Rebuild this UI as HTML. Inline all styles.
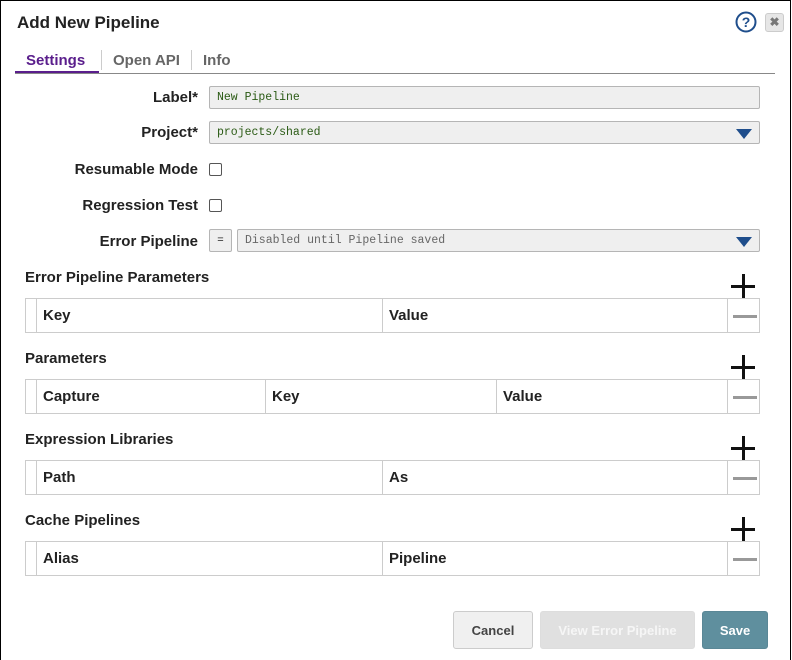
<!DOCTYPE html>
<html><head><style>
*{box-sizing:border-box;margin:0;padding:0}
body{width:792px;height:660px;background:#fff;font-family:"Liberation Sans",sans-serif;position:relative;overflow:hidden;color:#222}
.frame{position:absolute;left:0;top:0;width:791px;height:660px;border:1.5px solid #000;border-bottom:none}
.a{position:absolute}
.lbl{position:absolute;right:594px;font-weight:bold;font-size:15px;color:#222;text-align:right;white-space:nowrap}
.inp{position:absolute;background:#efefef;border:1px solid #b5b5b5;border-radius:2px;font-family:"Liberation Mono",monospace;font-size:11.5px;color:#2a5a14;padding-left:7px;line-height:22px;height:23px}
.tri{position:absolute;right:7px;top:7px;width:0;height:0;border-left:8px solid transparent;border-right:8px solid transparent;border-top:10px solid #1f4e8c}
.cb{position:absolute;left:209px;width:13px;height:13px;border:1px solid #555;border-radius:2px;background:#fff}
.sec{position:absolute;left:25px;font-weight:bold;font-size:15px;color:#222}
.tbl{position:absolute;left:25px;width:735px;height:35px;border:1px solid #ccc}
.tbl div{position:absolute;top:0;height:33px;border-left:1px solid #ccc;font-weight:bold;font-size:15px;line-height:34px;padding-left:6px}
.plus{position:absolute;left:731px;width:24px;height:24px}
.plus:before{content:"";position:absolute;left:10.5px;top:0;width:3px;height:24px;background:#111}
.plus:after{content:"";position:absolute;left:0;top:10.5px;width:24px;height:3px;background:#111}
.minus{position:absolute;left:733px;width:24px;height:3px;background:#999}
.btn{position:absolute;top:611px;height:38px;border-radius:3px;font-weight:bold;font-size:13px;text-align:center;line-height:38px}
</style></head><body>
<div class="frame"></div>
<div class="a" style="left:17px;top:13px;font-size:17px;font-weight:bold;color:#222">Add New Pipeline</div>
<svg class="a" style="left:735px;top:11px" width="22" height="22"><circle cx="11" cy="11" r="9.5" fill="none" stroke="#1f4e8c" stroke-width="2"/><text x="11" y="16" text-anchor="middle" font-family="Liberation Sans" font-weight="bold" font-size="14" fill="#1f4e8c">?</text></svg>
<div class="a" style="left:765px;top:13px;width:19px;height:19px;background:#e6e6e6;border:1px solid #ccc;border-radius:3px;color:#777;font-size:12px;font-weight:bold;text-align:center;line-height:17px">✖</div>
<div class="a" style="left:26px;top:52px;font-size:15px;font-weight:bold;color:#5a1e8c">Settings</div>
<div class="a" style="left:15px;top:71px;width:84px;height:3px;background:#5a1e8c"></div>
<div class="a" style="left:101px;top:50px;width:1px;height:20px;background:#ccc"></div>
<div class="a" style="left:113px;top:52px;font-size:15px;font-weight:bold;color:#666">Open API</div>
<div class="a" style="left:191px;top:50px;width:1px;height:20px;background:#ccc"></div>
<div class="a" style="left:203px;top:52px;font-size:15px;font-weight:bold;color:#666">Info</div>
<div class="a" style="left:15px;top:73px;width:760px;height:1px;background:#888"></div>

<div class="lbl" style="top:89px">Label*</div>
<div class="inp" style="left:209px;top:86px;width:551px">New Pipeline</div>
<div class="lbl" style="top:124px">Project*</div>
<div class="inp" style="left:209px;top:121px;width:551px">projects/shared<span class="tri"></span></div>
<div class="lbl" style="top:161px">Resumable Mode</div>
<div class="cb" style="top:163px"></div>
<div class="lbl" style="top:197px">Regression Test</div>
<div class="cb" style="top:199px"></div>
<div class="lbl" style="top:233px">Error Pipeline</div>
<div class="a" style="left:209px;top:229px;width:23px;height:23px;background:#efefef;border:1px solid #b5b5b5;border-radius:2px;font-size:11px;text-align:center;line-height:21px">=</div>
<div class="inp" style="left:237px;top:229px;width:523px;color:#666">Disabled until Pipeline saved<span class="tri"></span></div>

<div class="sec" style="top:269px">Error Pipeline Parameters</div>
<div class="plus" style="top:274px"></div>
<div class="tbl" style="top:298px"><div style="left:10px;width:346px">Key</div><div style="left:356px;width:345px">Value</div><div style="left:701px;width:33px"></div></div>
<div class="minus" style="top:315px"></div>

<div class="sec" style="top:350px">Parameters</div>
<div class="plus" style="top:355px"></div>
<div class="tbl" style="top:379px"><div style="left:10px;width:229px">Capture</div><div style="left:239px;width:230px">Key</div><div style="left:470px;width:231px">Value</div><div style="left:701px;width:33px"></div></div>
<div class="minus" style="top:396px"></div>

<div class="sec" style="top:431px">Expression Libraries</div>
<div class="plus" style="top:436px"></div>
<div class="tbl" style="top:460px"><div style="left:10px;width:346px">Path</div><div style="left:356px;width:345px">As</div><div style="left:701px;width:33px"></div></div>
<div class="minus" style="top:477px"></div>

<div class="sec" style="top:512px">Cache Pipelines</div>
<div class="plus" style="top:517px"></div>
<div class="tbl" style="top:541px"><div style="left:10px;width:346px">Alias</div><div style="left:356px;width:345px">Pipeline</div><div style="left:701px;width:33px"></div></div>
<div class="minus" style="top:558px"></div>

<div class="btn" style="left:453px;width:80px;background:#f0f0f0;border:1px solid #ccc;color:#444">Cancel</div>
<div class="btn" style="left:540px;width:155px;background:#e0e0e0;border:1px solid #ddd;color:#f6f6f6">View Error Pipeline</div>
<div class="btn" style="left:702px;width:66px;background:#5f8f9e;border:1px solid #5a8796;color:#fff">Save</div>
</body></html>
